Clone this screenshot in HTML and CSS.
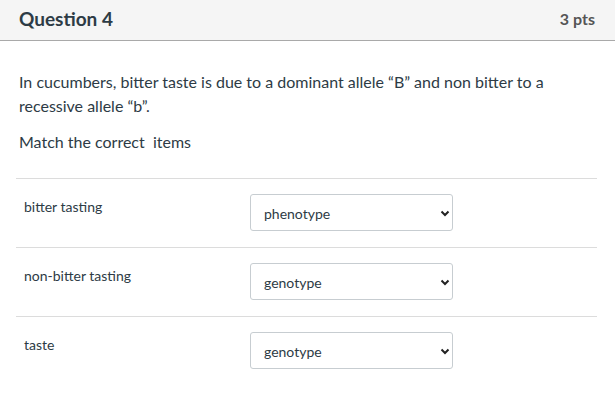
FILE: index.html
```html
<!DOCTYPE html>
<html lang="en">
<head>
  <meta charset="UTF-8">
  <title>Question 4</title>
  <link rel="stylesheet" href="styles.css">
</head>
<body>
  <div class="question">
    <div class="question-header">
      <span class="question-name">Question 4</span>
      <span class="question-points">3 pts</span>
    </div>

    <div class="question-text">
      <p>In cucumbers, bitter taste is due to a dominant allele “B” and non bitter to a recessive allele “b”.</p>
      <p>Match the correct &nbsp;items</p>
    </div>

    <div class="answers">
      <div class="answer-row">
        <div class="answer-label">bitter tasting</div>
        <div class="select-wrap">
          <select>
            <option>phenotype</option>
            <option>genotype</option>
          </select>
          <svg class="chevron" width="10" height="7" viewBox="0 0 10 7"><path d="M1.5 1.5 L5 5 L8.5 1.5" fill="none" stroke="#222" stroke-width="2"/></svg>
        </div>
      </div>
      <div class="answer-row">
        <div class="answer-label">non-bitter tasting</div>
        <div class="select-wrap">
          <select>
            <option>genotype</option>
            <option>phenotype</option>
          </select>
          <svg class="chevron" width="10" height="7" viewBox="0 0 10 7"><path d="M1.5 1.5 L5 5 L8.5 1.5" fill="none" stroke="#222" stroke-width="2"/></svg>
        </div>
      </div>
      <div class="answer-row">
        <div class="answer-label">taste</div>
        <div class="select-wrap">
          <select>
            <option>genotype</option>
            <option>phenotype</option>
          </select>
          <svg class="chevron" width="10" height="7" viewBox="0 0 10 7"><path d="M1.5 1.5 L5 5 L8.5 1.5" fill="none" stroke="#222" stroke-width="2"/></svg>
        </div>
      </div>
    </div>
  </div>
</body>
</html>
```

FILE: styles.css
```css
body {
  margin: 0;
  font-family: Lato, "Liberation Sans", sans-serif;
  color: #2d3b45;
  background-color: #fff;
}

.question-header {
  display: flex;
  justify-content: space-between;
  align-items: center;
  height: 36px;
  padding: 0 20px 4px 19px;
  background-color: #f5f5f5;
  border-bottom: 1px solid #a9a9a9;
}

.question-name {
  font-size: 19px;
  font-weight: bold;
  color: #2d3b45;
}

.question-points {
  font-size: 16px;
  font-weight: bold;
  color: #555;
}

.question-text {
  padding: 29px 19px 0;
  font-size: 16px;
  line-height: 24px;
}

.question-text p {
  margin: 0 0 12px;
}

.answers {
  margin: 24px 18px 0 16px;
}

.answer-row {
  display: flex;
  align-items: flex-start;
  height: 68px;
  border-top: 1px solid #dcdcdc;
}

.answer-label {
  width: 226px;
  padding: 19px 0 0 8px;
  font-size: 14px;
  line-height: 18px;
}

.select-wrap {
  position: relative;
  margin-top: 15px;
}

.select-wrap select {
  appearance: none;
  -webkit-appearance: none;
  width: 203px;
  height: 37px;
  padding: 2px 0 0 13px;
  font-family: Lato, "Liberation Sans", sans-serif;
  font-size: 14px;
  color: #2d3b45;
  background-color: #fff;
  border: 1px solid #c7cdd1;
  border-radius: 3px;
}

.chevron {
  position: absolute;
  right: 3px;
  top: 16px;
  pointer-events: none;
}
```
